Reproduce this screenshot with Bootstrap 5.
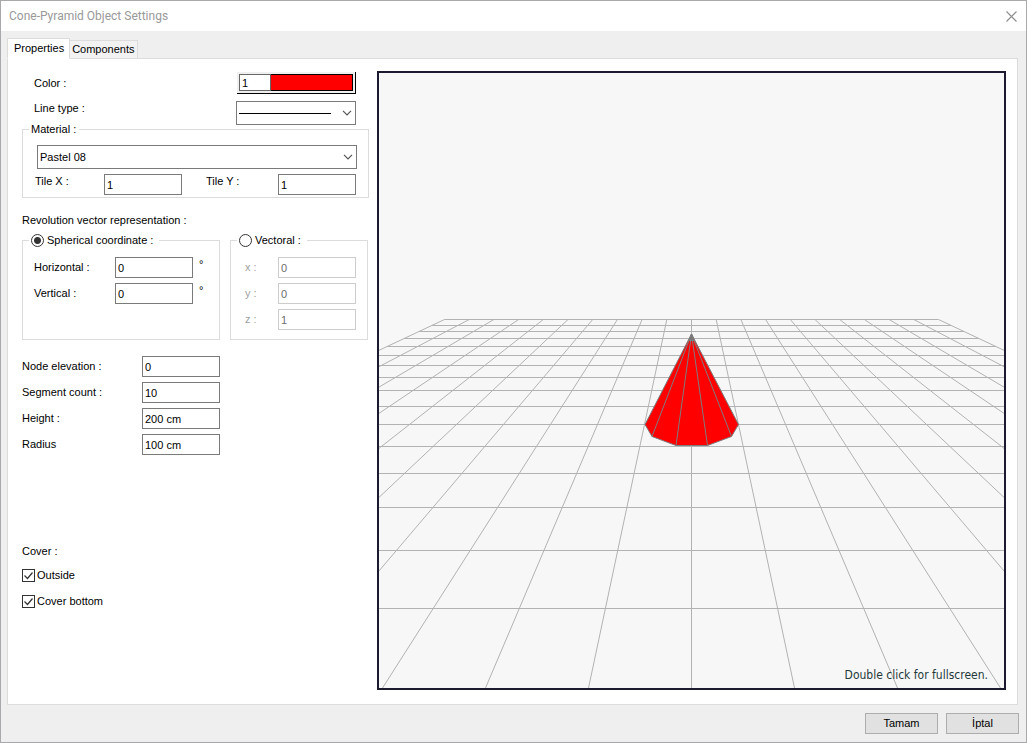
<!doctype html>
<html lang="en">
<head>
<meta charset="utf-8">
<meta name="viewport" content="width=device-width, initial-scale=1">
<title>Cone-Pyramid Object Settings</title>
<link href="https://cdn.jsdelivr.net/npm/bootstrap@5.3.0/dist/css/bootstrap.min.css" rel="stylesheet">
<style>
body{font-family:"Liberation Sans",Arial,sans-serif;font-size:11px;line-height:15px;color:#000;background:#efefef}
.dialog{border:1px solid #a9a9ab;background:#efefef}
.titlebar{height:30px;padding:0 8px;font:12px/18px Roboto,sans-serif;color:#999}
.close-x{width:13px;height:13px}
.tabs{padding:7px 6px 0}
.tabs .nav-link{border:1px solid #dcdcdc;border-radius:0;color:#000;background:#f2f2f2;height:18px;padding:1px 2px;margin:0}
.tabs .nav-link.active{background:#fff;border-color:#dcdcdc;border-bottom-color:#fff;color:#000;height:21px;padding:2px 5px 2px 6px;margin-bottom:-1px;position:relative}
.panel{margin:0 8px 0 6px;border:1px solid #dcdcdc;background:#fff;padding:12px 11px 14px 14px;gap:8px}
.props{width:347px;padding-top:1px}
.row-end{padding-right:13px;padding-left:12px}
.row-gap{margin-top:7px}
.box{width:78px;height:21px;border:1px solid #7a7a7a;border-radius:0;padding:0 2px;font-size:11px;line-height:19px;color:#000;background:#fff;flex:none}
.box:disabled{border-color:#ccc;color:#6d6d6d;background:#fff}
.pick{height:24px;border:1px solid #7a7a7a;border-radius:0;padding:0 20px 0 2px;font-size:11px;line-height:22px;color:#000;background:#fff url("data:image/svg+xml,%3Csvg xmlns='http://www.w3.org/2000/svg' width='10' height='6'%3E%3Cpath d='M1 .8l4 4 4-4' fill='none' stroke='%23555' stroke-width='1.2'/%3E%3C/svg%3E") no-repeat right 3px center;appearance:none}
.pick-line{width:120px;background-image:url("data:image/svg+xml,%3Csvg xmlns='http://www.w3.org/2000/svg' width='10' height='6'%3E%3Cpath d='M1 .8l4 4 4-4' fill='none' stroke='%23555' stroke-width='1.2'/%3E%3C/svg%3E"),linear-gradient(#000,#000);background-position:right 3px center,2px 11px;background-size:10px 6px,92px 1px}
.swatch{width:119px;height:22px;background:#f0f0f0;border:solid #000;border-width:0 1px 1px 0;padding:2px}
.swatch .box{width:32px;height:17px;border-color:#666;line-height:15px}
.swatch button{background:#f00;border:1px solid #000;border-left:0;height:17px;padding:0}
.group{border:1px solid #dcdcdc;padding:0}
.group legend{float:none;width:auto;margin:0 0 0 6px;padding:0 3px 0 2px;font-size:11px;line-height:15px;height:15px;display:flex;align-items:center;gap:3px}
.group .wide-end{padding-right:6px}
.material{margin-top:-3px}
.material .inner{padding:8px 11px 2px 14px}
.tiles{padding-top:5px}
.tiles .box:last-child{margin-right:1px}
.tiles label{margin-left:-2px}
.w-tile{width:69px}
.ty-label{padding-left:26px}
.tick{appearance:none;width:13px;height:13px;border:1px solid #333;background:#fff;margin:0;flex:none}
.tick[type=radio]{border-radius:50%}
.tick[type=radio]:checked{background:radial-gradient(circle,#333 0 3px,#fff 4px)}
.tick[type=checkbox]:checked{background:#fff url("data:image/svg+xml,%3Csvg xmlns='http://www.w3.org/2000/svg' width='11' height='11'%3E%3Cpath d='M1.5 5.5l3 3 5-6' fill='none' stroke='%23333' stroke-width='1.2'/%3E%3C/svg%3E") center no-repeat}
.heading{padding-top:15px}
.modes{margin-top:5px;gap:10px}
.spherical{width:198px;height:107px}
.vectoral{width:138px;height:107px}
.stack{gap:5px;padding:9px 11px 0}
.stack.dim{padding-left:14px;color:#a0a0a0}
.deg{width:15px;padding-left:6px}
.dims{gap:5px}
.dims label{width:120px}
.cover{margin-top:89px;gap:9px}
.checks{gap:11px}
.checks label{padding-left:2px}
.preview{border:2px solid #1b1a30;background:#f7f7f7;min-width:0}
.preview svg{min-width:0}
.tip{right:16px;bottom:4px;font:12px/18px "DejaVu Sans Condensed","DejaVu Sans",sans-serif;color:#243a3a}
.actions{padding:8px 7px;gap:8px}
.actions .btn{width:73px;height:21px;padding:0;border:1px solid #adadad;border-radius:0;background:#e1e1e1;font-size:11px;line-height:19px;color:#000}
</style>
</head>
<body>
<main class="dialog d-flex flex-column min-vh-100">
  <header class="titlebar bg-white d-flex align-items-center justify-content-between">
    <span>Cone-Pyramid Object Settings</span>
    <button type="button" class="btn p-0 border-0 d-flex" aria-label="Close">
      <svg class="close-x" viewBox="0 0 13 13"><path d="M1.5 1.5l10 10M11.5 1.5l-10 10" stroke="#8c8c8c" stroke-width="1.1"/></svg>
    </button>
  </header>
  <ul class="tabs nav align-items-end">
    <li class="nav-item"><a class="nav-link active" href="#properties">Properties</a></li>
    <li class="nav-item"><a class="nav-link border-start-0 border-bottom-0" href="#components">Components</a></li>
  </ul>

  <section id="properties" class="panel d-flex flex-fill">
    <form class="props flex-shrink-0">
      <div class="row-end d-flex justify-content-between">
        <label for="color" class="pt-1">Color :</label>
        <div class="swatch d-flex">
          <input id="color" class="box" value="1">
          <button type="button" class="flex-fill" aria-label="Choose color"></button>
        </div>
      </div>
      <div class="row-end row-gap d-flex justify-content-between">
        <label for="ltype">Line type :</label>
        <select id="ltype" class="pick pick-line"><option></option></select>
      </div>
      <fieldset class="group material">
        <legend>Material :</legend>
        <div class="inner">
          <select class="pick w-100" aria-label="Material"><option>Pastel 08</option></select>
          <div class="tiles d-flex">
            <label for="tx" class="w-tile">Tile X :</label>
            <input id="tx" class="box" value="1">
            <label for="ty" class="ty-label flex-fill">Tile Y :</label>
            <input id="ty" class="box" value="1">
          </div>
        </div>
      </fieldset>

      <div class="heading">Revolution vector representation :</div>
      <div class="modes d-flex">
        <fieldset class="group spherical">
          <legend class="wide-end"><input type="radio" class="tick" name="mode" id="sph" checked><label for="sph">Spherical coordinate :</label></legend>
          <div class="stack d-flex flex-column">
            <div class="d-flex align-items-center">
              <label for="hor" class="flex-fill">Horizontal :</label>
              <input id="hor" class="box" value="0"><span class="deg align-self-start">°</span>
            </div>
            <div class="d-flex align-items-center">
              <label for="ver" class="flex-fill">Vertical :</label>
              <input id="ver" class="box" value="0"><span class="deg align-self-start">°</span>
            </div>
          </div>
        </fieldset>
        <fieldset class="group vectoral">
          <legend class="wide-end"><input type="radio" class="tick" name="mode" id="vec"><label for="vec">Vectoral :</label></legend>
          <div class="stack dim d-flex flex-column">
            <div class="d-flex align-items-center justify-content-between"><label for="vx">x :</label><input id="vx" class="box" value="0" disabled></div>
            <div class="d-flex align-items-center justify-content-between"><label for="vy">y :</label><input id="vy" class="box" value="0" disabled></div>
            <div class="d-flex align-items-center justify-content-between"><label for="vz">z :</label><input id="vz" class="box" value="1" disabled></div>
          </div>
        </fieldset>
      </div>

      <div class="dims d-flex flex-column mt-3">
        <div class="d-flex align-items-center"><label for="elev">Node elevation :</label><input id="elev" class="box" value="0"></div>
        <div class="d-flex align-items-center"><label for="seg">Segment count :</label><input id="seg" class="box" value="10"></div>
        <div class="d-flex align-items-center"><label for="hei">Height :</label><input id="hei" class="box" value="200 cm"></div>
        <div class="d-flex align-items-center"><label for="rad">Radius</label><input id="rad" class="box" value="100 cm"></div>
      </div>

      <div class="cover d-flex flex-column">
        <div>Cover :</div>
        <div class="checks d-flex flex-column">
          <div class="d-flex align-items-center"><input type="checkbox" class="tick" id="outside" checked><label for="outside">Outside</label></div>
          <div class="d-flex align-items-center"><input type="checkbox" class="tick" id="bottom" checked><label for="bottom">Cover bottom</label></div>
        </div>
      </div>
    </form>

    <div class="preview position-relative flex-fill d-flex">
      <svg class="flex-fill" viewBox="0 0 625 615" preserveAspectRatio="xMidYMid slice" role="img" aria-label="Red cone on a ground grid">
        <g fill="none" stroke="#b2b2b2">
          <path d="M65.5 246.5H559.5M53 252.5H572M40 258.5H585M25 265.5H600M8 273.5H617M0 282.5H625M0 292.5H625M0 304.5H625M0 317.5H625M0 333.5H625M0 351.5H625M0 373.5H625M0 400.5H625M0 434.5H625M0 477.5H625M0 535.5H625"/>
          <path d="M65.5 246.5L-717.5 615M90.2 246.5L-614.5 615M114.9 246.5L-511.5 615M139.6 246.5L-408.5 615M164.3 246.5L-305.5 615M189 246.5L-202.5 615M213.7 246.5L-99.5 615M238.4 246.5L3.5 615M263.1 246.5L106.5 615M287.8 246.5L209.5 615M312.5 246.5V615M337.2 246.5L415.5 615M361.9 246.5L518.5 615M386.6 246.5L621.5 615M411.3 246.5L724.5 615M436 246.5L827.5 615M460.7 246.5L930.5 615M485.4 246.5L1033.5 615M510.1 246.5L1136.5 615M534.8 246.5L1239.5 615M559.5 246.5L1342.5 615"/>
        </g>
        <g stroke="#7d7d7d" stroke-linejoin="round">
          <path fill="#f00" d="M312.5 261L266 351.5L273 363.5L297 372.5H328.5L352.5 363.5L359.5 351.5Z"/>
          <path fill="none" d="M312.5 261L273 363.5M312.5 261L297 372.5M312.5 261L328.5 372.5M312.5 261L352.5 363.5"/>
          <path fill="#777" d="M312.5 261L309.5 267.5H315.5Z"/>
        </g>
      </svg>
      <div class="tip position-absolute">Double click for fullscreen.</div>
    </div>
  </section>

  <footer class="actions d-flex justify-content-end">
    <button type="button" class="btn">Tamam</button>
    <button type="button" class="btn">İptal</button>
  </footer>
</main>
<script src="https://cdn.jsdelivr.net/npm/bootstrap@5.3.0/dist/js/bootstrap.bundle.min.js"></script>
</body>
</html>
